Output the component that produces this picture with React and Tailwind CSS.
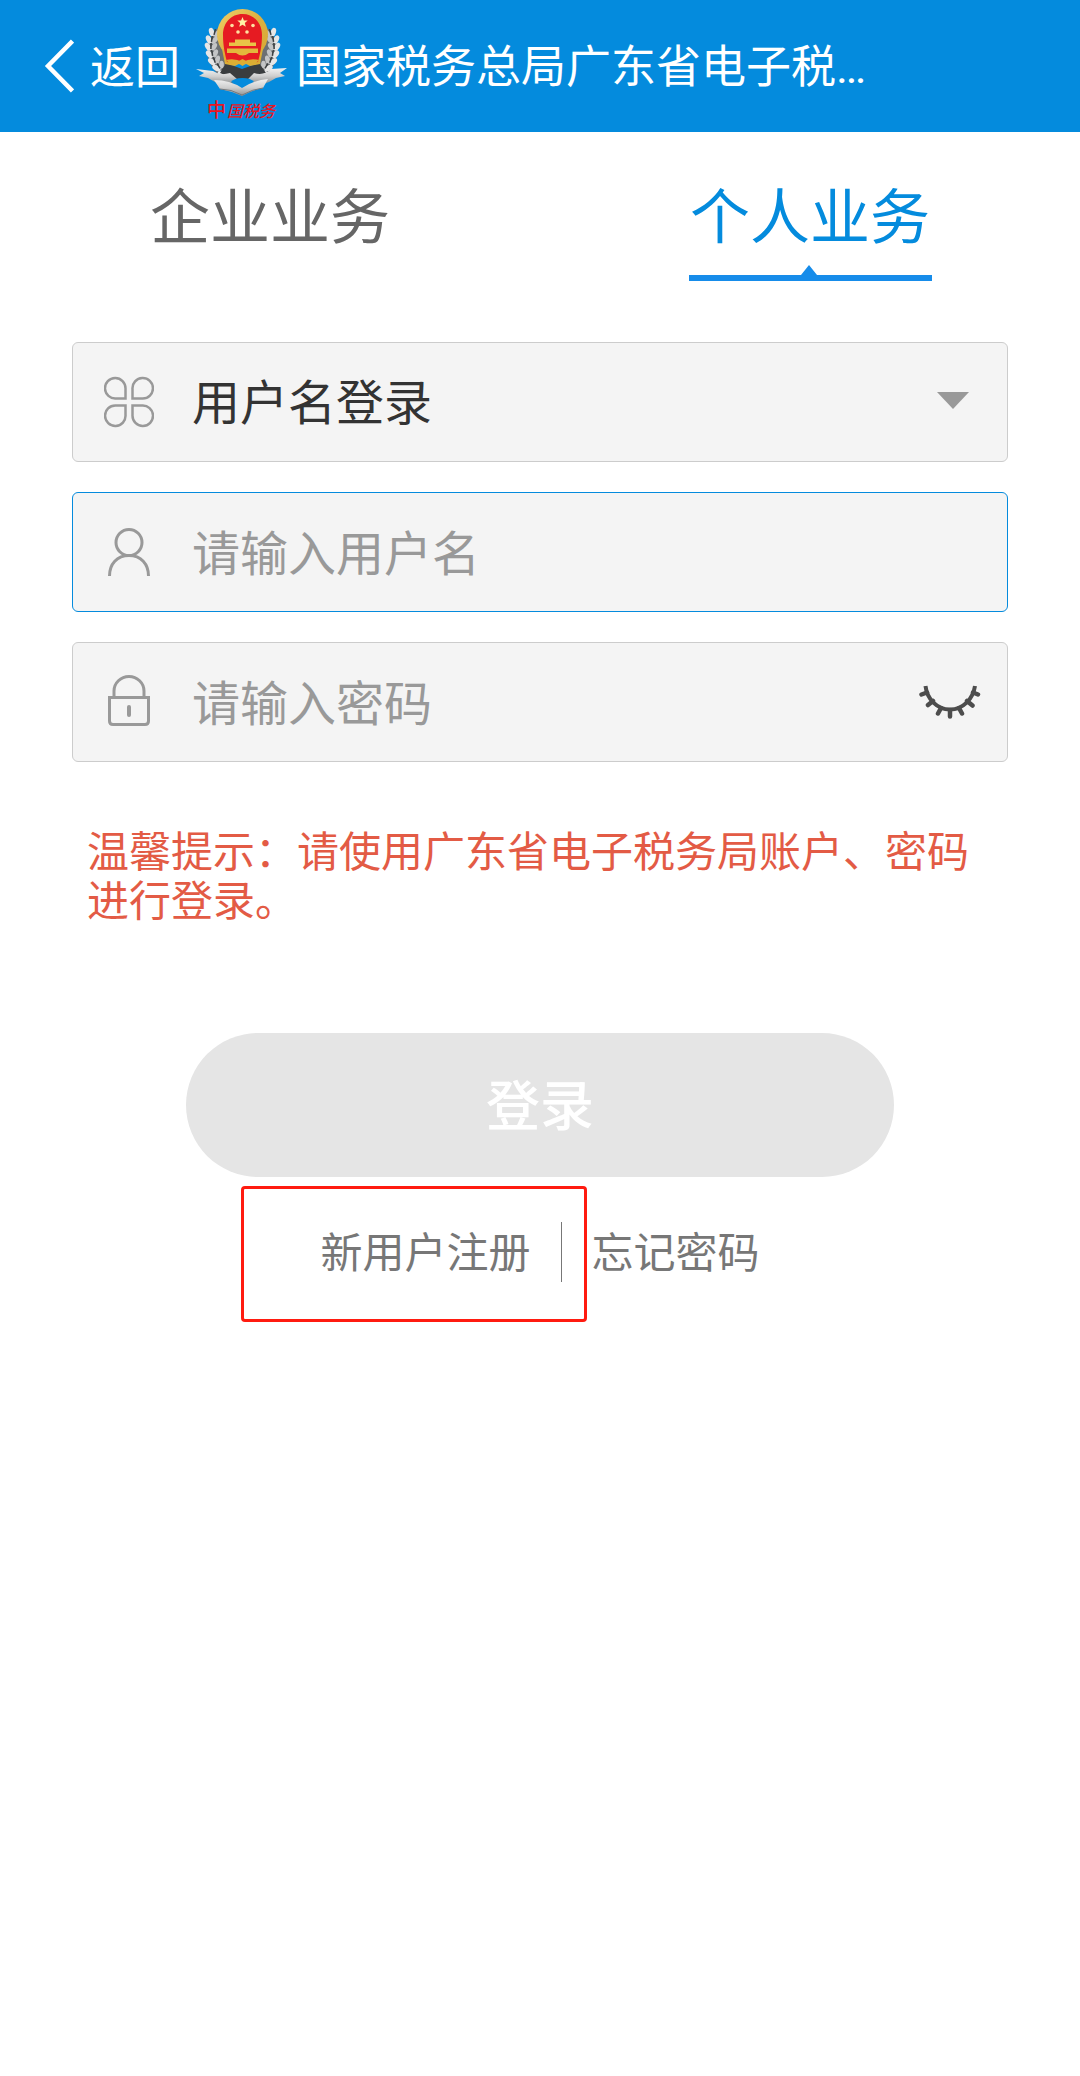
import { useState } from "react";

const FONT = "font-['Noto_Sans','Noto_Sans_CJK_SC',sans-serif]";

function Emblem() {
  const leaves = [
    [21, 22, 14], [18, 29, 8], [17, 36, 2], [18, 43, -8], [20, 50, -18], [24, 56, -30], [29, 61, -42], [34, 66, -55],
  ];
  const side = (
    <g>
      <path d="M24 17C5 33 7 58 34 75L44 72V60C30 56 23 42 24 17Z" fill="#6c7073" />
      {leaves.map(([x, y, r], i) => (
        <g key={i} transform={`translate(${x - 2} ${y}) rotate(${r})`}>
          <ellipse cx="-3.500" cy="0" rx="2.600" ry="4.400" fill="#e6e6e6" transform="rotate(-32)" />
          <ellipse cx="3.500" cy="0" rx="2.400" ry="4.400" fill="#c4c5c6" transform="rotate(32)" />
          <path d="M0 4V-2" stroke="#3c3f41" strokeWidth="1.500" />
        </g>
      ))}
    </g>
  );
  return (
    <svg viewBox="0 0 92 114" className="h-[114px] w-[92px] shrink-0 overflow-visible" role="img" aria-label="中国税务">
      <defs>
        <linearGradient id="gold" x1="0" y1="0" x2="1" y2="1">
          <stop offset="0" stopColor="#f0d06a" />
          <stop offset=".5" stopColor="#dcb040" />
          <stop offset="1" stopColor="#d9a832" />
        </linearGradient>
        <linearGradient id="silver" x1="0" y1="0" x2="0" y2="1">
          <stop offset="0" stopColor="#f2f2f2" />
          <stop offset=".5" stopColor="#cfcfcf" />
          <stop offset="1" stopColor="#8d8f90" />
        </linearGradient>
      </defs>
      {side}
      <g transform="translate(93 0) scale(-1 1)">{side}</g>
      <path d="M30 54L46 60L63 54L70 64L48 72L44 72L24 64Z" fill="#3a3d3f" />
      <circle cx="46.500" cy="25.500" r="25.500" fill="url(#gold)" />
      <path d="M26 40L29 55L39 57L46.500 53L54 57L64 55L67 40Z" fill="#dcae34" />
      <path d="M46.500 5C58 5 66 14 66 26C66 37 64 45 62 53L54 54L46.500 50L39 54L31 53C29 45 27 37 27 26C27 14 35 5 46.500 5Z" fill="#e61b22" />
      <path d="M46.500 8l1.400 3.400 3.800.2-2.900 2.400 1 3.700-3.300-2-3.300 2 1-3.700-2.900-2.400 3.800-.2z" fill="#fff0a5" />
      <g fill="#ffe0a0">
        <circle cx="36" cy="16.500" r="1.800" />
        <circle cx="57" cy="16.500" r="1.800" />
        <circle cx="42" cy="23" r="1.800" />
        <circle cx="51" cy="23" r="1.800" />
      </g>
      <path d="M39 30.500H54V33.500H60V37H33V33.500H39Z" fill="#e9c447" />
      <path d="M31 39.500H62V44H53Q46.500 49 40 44H31Z" fill="#e3b83c" />
      <path d="M30 51Q39 49 46.500 53Q54 49 63 51L58 56Q51 53 46.500 57Q42 53 35 56Z" fill="#dcae34" />
      <path d="M0 60L17 62Q24 67 34 64L41 70Q31 78 19 73L12 69L3 67L8 64Z" fill="url(#silver)" />
      <path d="M91 59L75 60Q68 67 58 64L52 70Q62 78 73 73L80 69L89 67L84 64Z" fill="url(#silver)" />
      <path d="M35 73Q38 69 46.500 69Q55 69 58 73Q52 76 46.500 78Q41 76 35 73Z" fill="#048bdd" />
      <path d="M18 71Q34 71 46 79Q58 71 72 70L67 79Q56 81 46 87Q35 82 24 80Z" fill="url(#silver)" />
      <path d="M24 80Q35 80 46 86Q57 80 67 79" fill="none" stroke="#77797b" strokeWidth="1" />
      <g fontWeight="500" fill="#ec1420" fontFamily="'Noto Sans CJK SC', sans-serif">
        <text x="11" y="108" fontSize="19">中</text>
        <text x="31 47 63" y="108" fontSize="16" fontStyle="italic">国税务</text>
      </g>
    </svg>
  );
}

function CloverIcon() {
  return (
    <svg viewBox="0 0 50 60" className="h-15 w-[50px] shrink-0" fill="none" stroke="#999" strokeWidth="2.500" aria-hidden="true">
      {[0, 90, 180, 270].map((r) => (
        <path key={r} transform={`rotate(${r} 25 30)`} d="M21.500 26.500H12A10.250 10.250 0 1 1 21.500 16.500Z" />
      ))}
    </svg>
  );
}

function UserIcon() {
  return (
    <svg viewBox="0 0 50 60" className="h-15 w-[50px] shrink-0" fill="none" stroke="#999" strokeWidth="3" aria-hidden="true">
      <circle cx="25" cy="20.500" r="13" />
      <path d="M5.500 54C5.500 42 13 33.500 25 33.500S44.500 42 44.500 54" />
    </svg>
  );
}

function LockIcon() {
  return (
    <svg viewBox="0 0 50 60" className="h-15 w-[50px] shrink-0" fill="none" stroke="#999" strokeWidth="3" aria-hidden="true">
      <path d="M10 25V19A15 14.500 0 0 1 40 19V25" />
      <path d="M5.500 25.500H44.500V49Q44.500 52.500 41 52.500H9Q5.500 52.500 5.500 49Z" />
      <path d="M25 35V43" strokeWidth="4" strokeLinecap="round" />
    </svg>
  );
}

function ClosedEyeIcon() {
  return (
    <svg viewBox="0 0 62 60" className="h-15 w-[62px]" fill="none" stroke="#4d4d4d" aria-hidden="true">
      <path d="M6.500 14C8 27 18 37.500 31 37.500S54 27 56 14" strokeWidth="4" />
      <path d="M8 20.500L2.500 22.500M14 29L9 33M22 36L19 41.500M31 38V44.500M40 36L43 41.500M48 29L53.500 33.500M54 20.500L59 22.500" strokeWidth="4.500" strokeLinecap="round" />
    </svg>
  );
}

const fieldClass = "relative flex h-30 items-center rounded-md border bg-[#f4f4f4] pl-[31px]";
const inputClass = "h-full min-w-0 flex-1 bg-transparent pl-[38px] text-5xl outline-none placeholder:text-[#999] placeholder:opacity-100";

export default function App() {
  const [visible, setVisible] = useState(false);
  return (
    <div className={`min-h-screen bg-white text-[#333] ${FONT}`}>
      <header className="flex h-33 items-center bg-[#048bdd] pl-11 text-[45px] leading-none text-white">
        <button type="button" className="flex shrink-0 items-center gap-4">
          <svg viewBox="0 0 30 54" className="h-[54px] w-[30px]" fill="none" stroke="currentColor" strokeWidth="4.500" aria-hidden="true">
            <path d="M28.500 2L4 27L28.500 52" />
          </svg>
          <span>返回</span>
        </button>
        <div className="ml-4 flex min-w-0 items-center gap-2">
          <Emblem />
          <h1 className="whitespace-nowrap">
            国家税务总局广东省电子税<span className="font-['Roboto',sans-serif]">…</span>
          </h1>
        </div>
      </header>

      <div role="tablist" className="grid grid-cols-2 pt-10 text-6xl leading-[88px]">
        <button type="button" role="tab" aria-selected="false" className="text-[#666]">
          企业业务
        </button>
        <button type="button" role="tab" aria-selected="true" className="text-[#048bdd]">
          个人业务
        </button>
        <div className="col-start-2 flex flex-col items-center pt-1">
          <svg viewBox="0 0 243 17" className="h-[17px] w-[243px]" fill="#168cea" aria-hidden="true">
            <path d="M0 11H112L120 1L128 11H243V17H0Z" />
          </svg>
        </div>
      </div>

      <form className="px-18 pt-[61px]" onSubmit={(e) => e.preventDefault()}>
        <div className="flex flex-col gap-[30px]">
          <div className={`${fieldClass} border-[#ccc]`}>
            <CloverIcon />
            <select aria-label="登录方式" className="h-full min-w-0 flex-1 appearance-none bg-transparent pl-[38px] text-5xl outline-none">
              <option>用户名登录</option>
            </select>
            <svg viewBox="0 0 32 17" className="pointer-events-none absolute right-[38px] mb-1 h-[17px] w-8" fill="#999" aria-hidden="true">
              <path d="M0 0H32L16 17Z" />
            </svg>
          </div>
          <label className={`${fieldClass} border-[#048bdd]`}>
            <UserIcon />
            <input type="text" aria-label="用户名" placeholder="请输入用户名" className={inputClass} />
          </label>
          <div className={`${fieldClass} border-[#ccc] pr-[26px]`}>
            <LockIcon />
            <input type={visible ? "text" : "password"} aria-label="密码" placeholder="请输入密码" className={inputClass} />
            <button type="button" aria-label="显示密码" onClick={() => setVisible(!visible)}>
              <ClosedEyeIcon />
            </button>
          </div>
        </div>

        <p className="px-[15px] pt-16 text-[42px] leading-[49px] text-[#e35b45]">
          温馨提示：请使用广东省电子税务局账户、密码进行登录。
        </p>

        <button type="submit" className="mx-auto mt-[109px] block h-36 w-full max-w-[708px] rounded-full bg-[#e5e5e5] text-[54px] font-medium text-white">
          登录
        </button>
      </form>

      <nav className="mt-[45px] flex h-15 items-center justify-center text-[42px] leading-none text-[#777]">
        <div className="relative flex h-full items-center pr-[30px]">
          <a href="#register">新用户注册</a>
          <div className="pointer-events-none absolute -top-9 -right-[26px] -bottom-10 -left-[79px] rounded-sm border-3 border-[#ff1b10]" />
        </div>
        <span className="h-full w-px bg-[#777]" />
        <a href="#forgot" className="pl-[30px]">忘记密码</a>
      </nav>
    </div>
  );
}
